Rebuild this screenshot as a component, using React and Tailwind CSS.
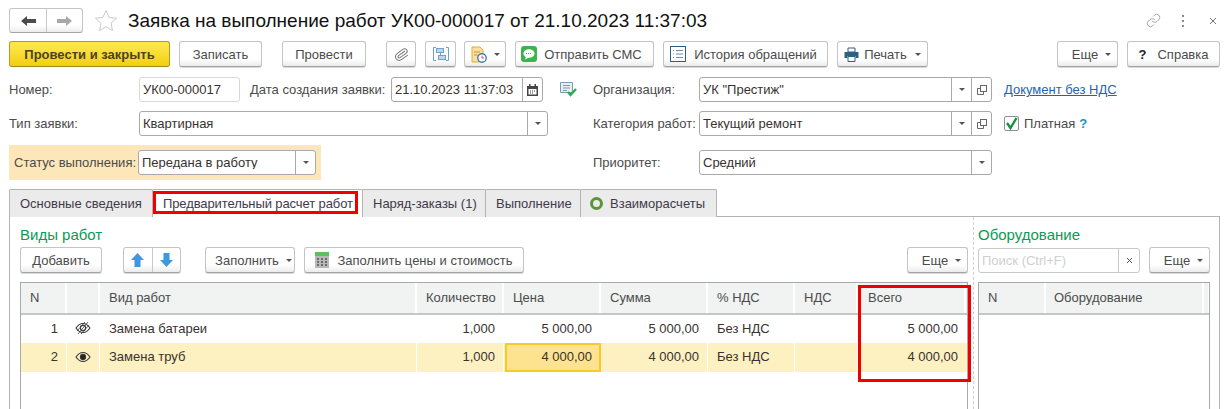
import React from "react";
import { Link, Paperclip } from "lucide-react";

const Caret = () => (
  <svg width="6" height="3" viewBox="0 0 6 3" className="shrink-0">
    <path d="M0 0h6L3 3z" fill="#555" />
  </svg>
);

const Btn = ({ className = "", children, primary = false }) => (
  <div
    className={`flex items-center justify-center h-[26px] shrink-0 rounded-[3px] border whitespace-nowrap ${
      primary
        ? "border-[#b59a1c] border-b-[#a08a20] bg-gradient-to-b from-[#ffe94f] to-[#f3cf00] font-bold text-[#4a4420]"
        : "border-[#c4c4c4] border-b-[#a3a3a3] bg-gradient-to-b from-white from-70% to-[#ececec] text-[#4b4b4b] shadow-[0_1px_0_#d8d8d8]"
    } ${className}`}
  >
    {children}
  </div>
);

const Field = ({ className = "", children, buttons = [] }) => (
  <div
    className={`flex items-center h-[25px] shrink-0 rounded-[3px] border border-[#a9a9a9] bg-white ${className}`}
  >
    <span className="flex-1 pl-[3px] text-[#3a3230] whitespace-nowrap overflow-hidden">
      {children}
    </span>
    {buttons.map((b, i) => (
      <span
        key={i}
        className="flex items-center justify-center w-[20px] h-full border-l border-[#a9a9a9]"
      >
        {b}
      </span>
    ))}
  </div>
);

const CopyIcon = () => (
  <svg width="10" height="10" viewBox="0 0 10 10" fill="none" stroke="#666">
    <rect x="3.5" y="0.5" width="6" height="6" fill="#fff" />
    <path d="M3.500 3.500h-3v6h6v-3" />
  </svg>
);

const Tab = ({ className = "", children }) => (
  <div
    className={`flex items-center h-[28px] shrink-0 border border-b-0 border-[#b4b4b4] rounded-t-[2px] whitespace-nowrap text-[#3f3a4a] ${className}`}
  >
    {children}
  </div>
);

const Eye = ({ off }) => (
  <svg width="16" height="14" viewBox="0 0 16 14" fill="none" stroke="#3a3a3a" strokeWidth="1.1">
    <path d="M1 7c2-3 4.300-4.500 7-4.500S13 4 15 7c-2 3-4.300 4.500-7 4.500S3 10 1 7z" />
    {off ? (
      <>
        <circle cx="8" cy="7" r="2.600" />
        <path d="M3 13L13 1M2 10L10 1M6 13l8-9" strokeWidth="0.8" />
      </>
    ) : (
      <circle cx="8" cy="7" r="2.600" fill="#222" />
    )}
  </svg>
);

const COLS = "grid grid-cols-[46px_33px_317px_87px_97px_107px_87px_63px_108px]";

const headers = ["N", "", "Вид работ", "Количество", "Цена", "Сумма", "% НДС", "НДС", "Всего"];

const rows = [
  { n: "1", name: "Замена батареи", qty: "1,000", price: "5 000,00", sum: "5 000,00", total: "5 000,00" },
  { n: "2", name: "Замена труб", qty: "1,000", price: "4 000,00", sum: "4 000,00", total: "4 000,00", active: true },
];

const Cell = ({ className = "", children }) => (
  <div className={`flex items-center pb-[2px] border-r border-white whitespace-nowrap overflow-hidden ${className}`}>
    {children}
  </div>
);

const Arrow = ({ down }) => (
  <svg width="13" height="14" viewBox="0 0 13 14" className={down ? "rotate-180" : ""}>
    <path d="M6.500 0L13 7H9.500v7h-6V7H0z" fill="#3f97dc" />
  </svg>
);

export default function App() {
  return (
    <div className="w-[1228px] h-[409px] overflow-hidden bg-white text-[13px] leading-none text-[#4b4b4b] font-['Liberation_Sans',Arial,sans-serif]">
      {/* Шапка */}
      <div className="flex items-center h-[25px] mt-[8px] pl-[9px]">
        <div className="flex h-[25px] w-[74px] rounded-[3px] border border-[#c4c4c4] border-b-[#a3a3a3] bg-gradient-to-b from-white from-70% to-[#ececec]">
          <span className="flex items-center justify-center w-[37px] border-r border-[#c8c8c8]">
            <svg width="15" height="10" viewBox="0 0 15 10">
              <path d="M0 5l6-5v3h9v4H6v3z" fill="#4c4c4c" />
            </svg>
          </span>
          <span className="flex items-center justify-center flex-1">
            <svg width="15" height="10" viewBox="0 0 15 10">
              <path d="M15 5L9 0v3H0v4h9v3z" fill="#a8a8a8" />
            </svg>
          </span>
        </div>
        <svg width="24" height="23" viewBox="0 0 24 23" className="ml-[11px]" fill="none" stroke="#c9c9c9">
          <path d="M12 1.500l3.100 6.900 7.400.8-5.500 5 1.500 7.300-6.500-3.700-6.500 3.700 1.500-7.300-5.500-5 7.400-.8z" />
        </svg>
        <h1 className="ml-[10px] text-[19px] text-[#111] whitespace-nowrap">
          Заявка на выполнение работ УК00-000017 от 21.10.2023 11:37:03
        </h1>
        <div className="flex items-center ml-auto pr-[11px] text-[#8a8a8a]">
          <Link size={15} strokeWidth={1.2} />
          <svg width="4" height="14" viewBox="0 0 4 14" className="ml-[20px]">
            <path d="M1 1h2v2H1zM1 6h2v2H1zM1 11h2v2H1z" fill="#8a8a8a" />
          </svg>
          <svg width="8" height="8" viewBox="0 0 8 8" className="ml-[24px]" stroke="#777">
            <path d="M1 1l6 6M7 1L1 7" />
          </svg>
        </div>
      </div>

      {/* Командная панель */}
      <div className="flex items-center mt-[8px] pl-[9px]">
        <Btn primary className="w-[161px]">Провести и закрыть</Btn>
        <Btn className="w-[83px] ml-[9px]">Записать</Btn>
        <Btn className="w-[84px] ml-[20px]">Провести</Btn>
        <Btn className="w-[30px] ml-[20px]">
          <Paperclip size={15} strokeWidth={1.6} className="text-[#777] rotate-[10deg]" />
        </Btn>
        <Btn className="w-[31px] ml-[9px]">
          <svg width="16" height="16" viewBox="0 0 16 16" fill="none" stroke="#6aa3cc">
            <path d="M3 1.500H.5v13H3M13 1.500h2.500v13H13" />
            <rect x="3.500" y="2.500" width="7" height="4" fill="#bcd7ea" />
            <rect x="5.500" y="9.500" width="7" height="4" fill="#bcd7ea" />
            <path d="M7.500 6.500v3" />
          </svg>
        </Btn>
        <Btn className="w-[42px] ml-[8px] gap-[7px]">
          <svg width="16" height="17" viewBox="0 0 16 17">
            <path d="M1 1h8l3 3v12H1z" fill="#fbdf9b" stroke="#e0a94a" />
            <path d="M3 6h6M3 9h4" stroke="#c9923a" />
            <circle cx="11" cy="12" r="4.200" fill="#fff" stroke="#3f7fb5" strokeWidth="1.400" />
            <path d="M11 9.800V12h2" stroke="#d9534f" fill="none" />
          </svg>
          <Caret />
        </Btn>
        <Btn className="w-[139px] ml-[9px] gap-[7px] pr-[6px]">
          <svg width="16" height="16" viewBox="0 0 16 16">
            <rect width="16" height="16" rx="3" fill="#3fb24f" />
            <ellipse cx="8" cy="7.500" rx="5.500" ry="4.300" fill="#fff" />
            <path d="M5 10.500l-1 3 4-2z" fill="#fff" />
            <path d="M5 7.500h6" stroke="#3fb24f" strokeDasharray="1 1" />
          </svg>
          Отправить СМС
        </Btn>
        <Btn className="w-[165px] ml-[9px] gap-[8px] pr-[4px]">
          <svg width="16" height="16" viewBox="0 0 16 16" fill="none" stroke="#2f5f80">
            <rect x="0.500" y="0.500" width="15" height="15" />
            <path d="M3 4.500h1M6 4.500h7M3 8h1M6 8h7M3 11.500h1M6 11.500h7" stroke="#6d8ea5" />
          </svg>
          История обращений
        </Btn>
        <Btn className="w-[91px] ml-[9px] gap-[5px]">
          <svg width="15" height="15" viewBox="0 0 15 15">
            <path d="M4 1h7v4H4z" fill="#fff" stroke="#2f5f80" />
            <path d="M0.500 5h14v6h-3V9h-8v2h-3z" fill="#2f5f80" />
            <path d="M4 9.500h7v5H4z" fill="#fff" stroke="#2f5f80" />
          </svg>
          Печать
          <span className="ml-[3px] flex">
            <Caret />
          </span>
        </Btn>
        <Btn className="w-[61px] ml-auto gap-[7px] pl-[8px]">
          Еще
          <Caret />
        </Btn>
        <Btn className="w-[93px] ml-[9px] mr-[8px] gap-[11px]">
          <span className="text-[#222] font-bold">?</span>
          Справка
        </Btn>
      </div>

      {/* Реквизиты */}
      <div className="flex items-center mt-[10px] pl-[9px]">
        <span className="w-[130px] shrink-0">Номер:</span>
        <Field className="w-[101px] border-[#d9d9d9]">УК00-000017</Field>
        <span className="w-[141px] ml-[10px] shrink-0 whitespace-nowrap">Дата создания заявки:</span>
        <Field
          className="w-[152px]"
          buttons={[
            <svg key="c" width="11" height="12" viewBox="0 0 11 12">
              <path d="M0 2h11v10H0z" fill="#444" />
              <path d="M1.500 5h8v5.500h-8z" fill="#fff" />
              <path d="M2 0h1.500v3H2zM7.500 0H9v3H7.500z" fill="#444" />
              <path d="M3 6.500h1v1H3zM5 6.500h1v1H5zM7 6.500h1v1H7zM3 8.500h1v1H3zM5 8.500h1v1H5z" fill="#444" />
            </svg>,
          ]}
        >
          21.10.2023 11:37:03
        </Field>
        <span className="flex items-center w-[50px] shrink-0 pl-[17px]">
          <svg width="17" height="15" viewBox="0 0 17 15">
            <path d="M0.500 0.500h12v10h-12z" fill="#e6eef3" stroke="#7a9cb0" />
            <path d="M3 3.500h7M3 6h7M3 8.500h4" stroke="#7a9cb0" />
            <path d="M8 10l2.500 3L16 7" fill="none" stroke="#34a853" strokeWidth="2.400" />
          </svg>
        </span>
        <span className="w-[106px] shrink-0">Организация:</span>
        <Field className="w-[293px]" buttons={[<Caret key="a" />, <CopyIcon key="b" />]}>
          УК "Престиж"
        </Field>
        <a className="ml-[12px] text-[#1d63b8] underline whitespace-nowrap">Документ без НДС</a>
      </div>

      <div className="flex items-center mt-[9px] pl-[9px]">
        <span className="w-[130px] shrink-0">Тип заявки:</span>
        <Field className="w-[409px]" buttons={[<Caret key="a" />]}>Квартирная</Field>
        <span className="w-[45px] shrink-0" />
        <span className="w-[106px] shrink-0 whitespace-nowrap">Категория работ:</span>
        <Field className="w-[293px]" buttons={[<Caret key="a" />, <CopyIcon key="b" />]}>
          Текущий ремонт
        </Field>
        <span className="flex items-center justify-center w-[15px] h-[15px] ml-[12px] border border-[#8f8f8f] rounded-[2px]">
          <svg width="13" height="13" viewBox="0 0 13 13" fill="none" stroke="#12913f" strokeWidth="2.400">
            <path d="M2 6l3.500 5L11.500 1" />
          </svg>
        </span>
        <span className="ml-[5px]">Платная</span>
        <span className="ml-[4px] font-bold text-[#1d8fc0]">?</span>
      </div>

      <div className="flex items-center mt-[9px] pl-[9px]">
        <div className="flex items-center w-[312px] h-[35px] pl-[5px] bg-[#fde7b8]">
          <span className="w-[124px] shrink-0 whitespace-nowrap">Статус выполнения:</span>
          <Field className="w-[178px]" buttons={[<Caret key="a" />]}>Передана в работу</Field>
        </div>
        <span className="w-[106px] ml-[272px] shrink-0">Приоритет:</span>
        <Field className="w-[293px]" buttons={[<Caret key="a" />]}>Средний</Field>
      </div>

      {/* Вкладки */}
      <div className="relative z-10 flex mt-[9px] pl-[9px] -mb-px">
        <Tab className="w-[144px] pl-[10px] bg-[#ebebeb]">Основные сведения</Tab>
        <Tab className="relative w-[211px] pl-[10px] bg-white -ml-px tracking-[-0.1px]">
          Предварительный расчет работ
          <span className="absolute left-0 top-[1px] w-[205px] h-[23px] border-[3px] border-[#ef0000]" />
        </Tab>
        <Tab className="w-[124px] pl-[10px] bg-[#ebebeb] -ml-px">Наряд-заказы (1)</Tab>
        <Tab className="w-[96px] pl-[10px] bg-[#ebebeb] -ml-px">Выполнение</Tab>
        <Tab className="w-[137px] pl-[9px] gap-[7px] bg-[#ebebeb] -ml-px">
          <span className="w-[13px] h-[13px] rounded-full border-[3px] border-[#5c9438]" />
          Взаиморасчеты
        </Tab>
      </div>

      <div className="flex ml-[9px] w-[1211px] h-[193px] border border-b-0 border-[#b4b4b4] pl-[10px]">
        {/* Виды работ */}
        <div className="w-[948px] shrink-0">
          <div className="h-[30px] pt-[10px] text-[15px] text-[#0c9a55]">Виды работ</div>
          <div className="flex items-center">
            <Btn className="w-[82px]">Добавить</Btn>
            <div className="flex h-[26px] w-[58px] ml-[21px] rounded-[3px] border border-[#c4c4c4] border-b-[#a3a3a3] bg-gradient-to-b from-white from-70% to-[#ececec] shadow-[0_1px_0_#d8d8d8]">
              <span className="flex items-center justify-center flex-1 border-r border-[#c8c8c8]">
                <Arrow />
              </span>
              <span className="flex items-center justify-center flex-1">
                <Arrow down />
              </span>
            </div>
            <Btn className="w-[90px] ml-[24px] gap-[7px] pl-[7px]">
              Заполнить
              <Caret />
            </Btn>
            <Btn className="w-[220px] ml-[9px] gap-[8px]">
              <svg width="14" height="16" viewBox="0 0 14 16">
                <rect width="14" height="16" fill="#b9b9b9" />
                <rect width="14" height="4" fill="#5cc05c" />
                <path d="M2 6h2v2H2zM6 6h2v2H6zM10 6h2v2h-2zM2 9h2v2H2zM6 9h2v2H6zM10 9h2v2h-2zM2 12h2v2H2zM6 12h2v2H6zM10 12h2v2h-2z" fill="#6b6b6b" />
              </svg>
              Заполнить цены и стоимость
            </Btn>
            <Btn className="w-[61px] ml-auto gap-[7px] pl-[8px]">
              Еще
              <Caret />
            </Btn>
          </div>

          <div className="relative mt-[9px] h-[127px] border-l border-r border-t border-[#a9a9a9] pr-0">
            <div className={`${COLS} h-[32px] bg-[#f1f3f2] border-b-2 border-[#c6c6c6]`}>
              {headers.map((h, i) => (
                <Cell key={i} className={`border-r-2 ${i === 8 ? "pl-[10px]" : "pl-[9px]"}`}>
                  {h}
                </Cell>
              ))}
            </div>
            {rows.map((r) => (
              <div
                key={r.n}
                className={`${COLS} ${r.active ? "h-[29px] bg-[#fdf1c2]" : "h-[28px]"} text-[#3a3230]`}
              >
                <Cell className="justify-end pr-[8px]">{r.n}</Cell>
                <Cell className="justify-center">
                  <Eye off={!r.active} />
                </Cell>
                <Cell className="pl-[9px]">{r.name}</Cell>
                <Cell className="justify-end pr-[8px]">{r.qty}</Cell>
                {r.active ? (
                  <div className="flex items-center justify-end ml-[1px] pr-[7px] pb-[2px] bg-[#fde38f] border-2 border-[#fbc926]">
                    {r.price}
                  </div>
                ) : (
                  <Cell className="justify-end pr-[8px]">{r.price}</Cell>
                )}
                <Cell className="justify-end pr-[8px]">{r.sum}</Cell>
                <Cell className="pl-[9px]">Без НДС</Cell>
                <Cell />
                <Cell className="justify-end pr-[8px] border-r-0">{r.total}</Cell>
              </div>
            ))}
            <span className="absolute left-[837px] top-[2px] w-[113px] h-[97px] border-[3px] border-[#ef0000]" />
          </div>
        </div>

        <div className="w-0 ml-[5px] border-l border-dashed border-[#d0d0d0]" />

        {/* Оборудование */}
        <div className="w-[232px] ml-[4px] shrink-0">
          <div className="h-[30px] pt-[10px] text-[15px] text-[#0c9a55]">Оборудование</div>
          <div className="flex items-center">
            <div className="flex items-center h-[25px] w-[162px] rounded-[3px] border border-[#c9c9c9]">
              <span className="flex-1 pl-[3px] text-[#cfcfcf]">Поиск (Ctrl+F)</span>
              <span className="flex items-center justify-center w-[21px] h-full border-l border-[#c9c9c9]">
                <svg width="7" height="7" viewBox="0 0 7 7" stroke="#555">
                  <path d="M1 1l5 5M6 1L1 6" />
                </svg>
              </span>
            </div>
            <Btn className="w-[61px] ml-[9px] gap-[7px] pl-[8px]">
              Еще
              <Caret />
            </Btn>
          </div>
          <div className="mt-[9px] h-[127px] border-l border-r border-t border-[#a9a9a9]">
            <div className="grid grid-cols-[67px_158px_1fr] h-[32px] bg-[#f1f3f2] border-b-2 border-[#c6c6c6]">
              <Cell className="pl-[9px] border-r-2">N</Cell>
              <Cell className="pl-[8px] border-r-2">Оборудование</Cell>
              <Cell />
            </div>
          </div>
        </div>
      </div>
    </div>
  );
}
